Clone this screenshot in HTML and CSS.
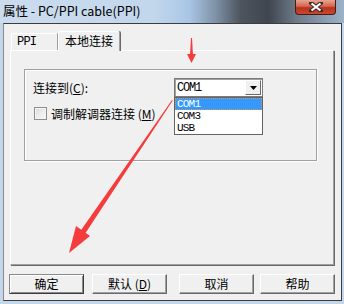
FILE: index.html
```html
<!DOCTYPE html>
<html lang="zh-CN">
<head>
  <meta charset="UTF-8">
  <title>属性 - PC/PPI cable(PPI)</title>
  <link rel="stylesheet" href="styles.css">
</head>
<body>
<div class="frame">
  <div class="titlebar">
    <span class="title">属性 - PC/PPI cable(PPI)</span>
    <span class="close-btn">
      <svg width="14" height="10" viewBox="0 0 14 10">
        <path d="M2 1 L12 9 M12 1 L2 9" stroke="#3a2a28" stroke-width="4" stroke-linecap="square"/>
        <path d="M2.5 1.5 L11.5 8.5 M11.5 1.5 L2.5 8.5" stroke="#fff" stroke-width="2.2"/>
      </svg>
    </span>
  </div>

  <div class="client">
    <div class="tab-strip">
      <div class="tab">PPI</div>
      <div class="tab tab-active">本地连接</div>
    </div>

    <div class="tab-page">
      <div class="group-box">
        <div class="port-row">
          <span class="port-label">连接到(<u>C</u>):</span>
          <div class="combo">
            <span class="combo-value">COM1</span>
            <span class="combo-btn">
              <svg width="7" height="4" viewBox="0 0 7 4"><path d="M0 0 H7 L3.5 4 Z" fill="#000"/></svg>
            </span>
            <ul class="combo-list">
              <li class="selected">COM1</li>
              <li>COM3</li>
              <li>USB</li>
            </ul>
          </div>
        </div>
        <div class="check-row">
          <span class="check-box"></span>
          <span>调制解调器连接 (<u>M</u>)</span>
        </div>
      </div>
    </div>

    <div class="button-row">
      <button class="btn btn-default">确定</button>
      <button class="btn">默认 (<u>D</u>)</button>
      <button class="btn btn-cancel">取消</button>
      <button class="btn btn-help">帮助</button>
    </div>
  </div>

  <svg class="arrows" width="344" height="304" viewBox="0 0 344 304">
    <polygon points="191,38 192,38 193,55 190,55" fill="#f53b3b"/>
    <polygon points="187,54 196,54 191.5,63" fill="#f53b3b"/>
    <polygon points="172,100 172.8,100.5 85.2,233.4 80.8,230.6" fill="#f53b3b"/>
    <polygon points="69,253 76,226 90,236" fill="#f53b3b"/>
  </svg>
</div>
</body>
</html>
```

FILE: styles.css
```css
html, body {
  margin: 0;
  padding: 0;
}
body {
  width: 344px;
  height: 304px;
  overflow: hidden;
  font-family: "Noto Sans CJK SC", "Liberation Sans", sans-serif;
  font-size: 12px;
  color: #000;
}
.frame {
  position: relative;
  width: 344px;
  height: 304px;
  background: #c4d6ea;
  display: flex;
  flex-direction: column;
}
.titlebar {
  height: 23px;
  display: flex;
  justify-content: space-between;
  align-items: flex-start;
  background: linear-gradient(90deg, #cbdcee 0%, #c2d6ec 45%, #a9c6e6 55%, #7d8fa3 63%, #4c545e 70%, #3f464f 78%, #6d7a88 86%, #9db3ca 100%);
}
.title {
  padding: 3px 0 0 3px;
  line-height: 16px;
  font-size: 12.5px;
  white-space: nowrap;
}
.close-btn {
  width: 41px;
  height: 15px;
  margin-right: 8px;
  box-sizing: border-box;
  border: 1px solid #4a1a14;
  border-top: none;
  border-radius: 0 0 4px 4px;
  background: linear-gradient(#e9a493 0%, #d2654f 45%, #b8331d 55%, #c9482f 100%);
  display: flex;
  align-items: center;
  justify-content: center;
}
.client {
  flex: 1;
  margin: 0 2px 3px 3px;
  border: 1px solid #3c3c3c;
  border-left-color: #8a8a8a;
  background: #f0f0f0;
  display: flex;
  flex-direction: column;
}

/* tabs */
.tab-strip {
  display: flex;
  align-items: flex-end;
  height: 19px;
  margin: 7px 0 0 6px;
}
.tab {
  box-sizing: border-box;
  height: 17px;
  width: 47px;
  margin-left: 1px;
  padding-left: 5px;
  line-height: 16px;
  font-family: "Liberation Mono", monospace;
  font-size: 12px;
  letter-spacing: -0.8px;
  border: 1px solid #fff;
  border-right-color: #a0a0a0;
  border-bottom: none;
  border-radius: 2px 2px 0 0;
  box-shadow: 1px 0 0 #696969;
}
.tab-active {
  position: relative;
  z-index: 1;
  height: 20px;
  width: 62px;
  margin-left: 0;
  margin-bottom: -1px;
  padding-left: 6px;
  line-height: 17px;
  letter-spacing: 0;
  font-family: "Noto Sans CJK SC", sans-serif;
  background: #f0f0f0;
}
.tab-page {
  box-sizing: border-box;
  width: 324px;
  height: 215px;
  margin-left: 6px;
  border: 1px solid #fff;
  border-right-color: #a0a0a0;
  border-bottom-color: #a0a0a0;
  box-shadow: 1px 1px 0 #696969;
  padding: 18px 0 0 13px;
}
.group-box {
  box-sizing: border-box;
  width: 293px;
  height: 92px;
  border: 1px solid #a0a0a0;
  box-shadow: inset 1px 1px 0 #fff, 1px 1px 0 #fff;
  padding: 8px 0 0 8px;
}
.port-row {
  display: flex;
  align-items: center;
}
.port-label {
  width: 141px;
}
.combo {
  position: relative;
  box-sizing: border-box;
  width: 89px;
  height: 19px;
  background: #fff;
  border: 1px solid #7a7a7a;
  box-shadow: inset 1px 1px 0 #a0a0a0;
  display: flex;
  align-items: center;
  justify-content: space-between;
}
.combo-value {
  padding-left: 2px;
  font-family: "Liberation Mono", monospace;
  font-size: 12px;
  letter-spacing: -1.2px;
}
.combo-btn {
  box-sizing: border-box;
  width: 16px;
  height: 15px;
  margin-right: 1px;
  background: #f0f0f0;
  border: 1px solid #fff;
  border-right-color: #696969;
  border-bottom-color: #696969;
  display: flex;
  align-items: center;
  justify-content: center;
}
.combo-list {
  position: absolute;
  top: 100%;
  left: -1px;
  z-index: 2;
  box-sizing: border-box;
  width: 89px;
  margin: 1px 0 0;
  padding: 0;
  list-style: none;
  background: #fff;
  border: 1px solid #646464;
  font-family: "Liberation Mono", monospace;
  font-size: 11px;
  letter-spacing: -0.8px;
}
.combo-list li {
  height: 12px;
  line-height: 12px;
  padding-left: 2px;
  overflow: hidden;
}
.combo-list li.selected {
  background: #3399ff;
  color: #fff;
  outline: 1px dotted #e0914a;
  outline-offset: -1px;
}
.check-row {
  display: flex;
  align-items: center;
  margin-top: 8px;
  padding-left: 1px;
}
.check-box {
  box-sizing: border-box;
  width: 13px;
  height: 13px;
  margin-right: 4px;
  border: 1px solid #8e8f8f;
  background: linear-gradient(135deg, #dcdcdc, #fbfbfb);
  box-shadow: inset 0 0 0 1px #f4f4f4;
}

/* buttons */
.button-row {
  display: flex;
  margin: 9px 0 0 5px;
}
.btn {
  box-sizing: border-box;
  width: 75px;
  height: 20px;
  padding: 0;
  background: #f0f0f0;
  border: 1px solid;
  border-color: #fff #696969 #696969 #fff;
  box-shadow: inset -1px -1px 0 #a0a0a0;
  font-family: "Noto Sans CJK SC", sans-serif;
  font-size: 12px;
  line-height: 16px;
  color: #000;
}
.btn + .btn {
  margin-left: 8px;
}
.btn-default {
  border-color: #8a8a8a #3c3c3c #3c3c3c #8a8a8a;
  box-shadow: inset 1px 1px 0 #fff, inset -1px -1px 0 #8a8a8a;
}
.btn + .btn-cancel {
  margin-left: 12px;
}
.btn + .btn-help {
  margin-left: 6px;
}
.arrows {
  position: absolute;
  top: 0;
  left: 0;
  pointer-events: none;
  z-index: 5;
}
```
